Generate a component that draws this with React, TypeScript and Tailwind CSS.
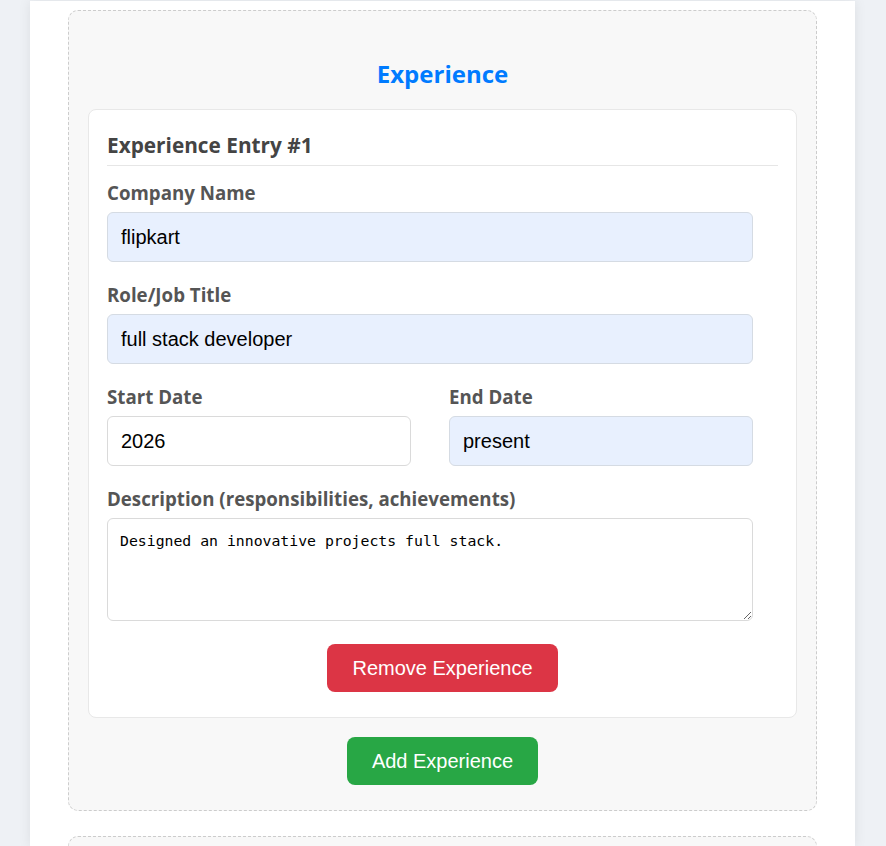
import React from "react";

const labelClass = "block h-[22px] leading-[22px] mb-[8px] text-[18.7px] font-bold text-[#555]";
const inputBase =
  "block h-[50px] rounded-[6px] border px-[13px] text-[20px] text-black outline-none";
const filled = "bg-[#e8f0fe] border-[#d5dbe3]";
const plain = "bg-white border-[#dadada]";

const Field: React.FC<{
  label: string;
  value: string;
  autofill?: boolean;
  className?: string;
  inputWidth: string;
}> = ({ label, value, autofill, className, inputWidth }) => (
  <div className={className}>
    <label className={labelClass}>{label}</label>
    <input
      readOnly
      value={value}
      className={`${inputBase} ${autofill ? filled : plain} ${inputWidth}`}
      style={{ fontFamily: '"Liberation Sans", Arial, sans-serif' }}
    />
  </div>
);

const App: React.FC = () => {
  return (
    <div className="h-screen overflow-hidden bg-[#eef1f5] font-['Open_Sans',sans-serif]">
      <div className="ml-[30px] mt-[1px] h-full w-[825px] bg-white px-[38px] pt-[9px] shadow-[0_0_12px_rgba(0,0,0,0.08)]">
        <section className="rounded-[10px] border border-dashed border-[#cccccc] bg-[#f8f8f8] px-[19px] pt-[20px] pb-[25px]">
          <h2 className="mt-[28px] mb-[21px] h-[29px] text-center text-[24px] leading-[29px] font-bold text-[#007bff]">
            Experience
          </h2>

          <div className="rounded-[8px] border border-[#e8e8e8] bg-white px-[18px] pt-[20px] pb-[25px]">
            <h3 className="mb-[16px] border-b border-[#e6e6e6] pt-[1px] pb-[6px] text-[20.8px] leading-[28px] font-bold text-[#444]">
              Experience Entry #1
            </h3>

            <Field label="Company Name" value="flipkart" autofill className="mb-[22px]" inputWidth="w-[646px]" />
            <Field
              label="Role/Job Title"
              value="full stack developer"
              autofill
              className="mb-[22px]"
              inputWidth="w-[646px]"
            />

            <div className="mb-[22px] flex gap-[15px]">
              <Field label="Start Date" value="2026" className="w-[327px]" inputWidth="w-[304px]" />
              <Field label="End Date" value="present" autofill className="w-[327px]" inputWidth="w-[304px]" />
            </div>

            <div>
              <label className={labelClass}>Description (responsibilities, achievements)</label>
              <textarea
                readOnly
                value="Designed an innovative projects full stack."
                className="block h-[103px] w-[646px] rounded-[6px] border border-[#dadada] bg-white px-[12px] py-[12px] text-[14.8px] leading-[20px] text-black outline-none"
                style={{ fontFamily: '"DejaVu Sans Mono", "Liberation Mono", monospace' }}
              />
            </div>

            <div className="mt-[23px] flex justify-center">
              <button
                type="button"
                className="h-[48px] w-[231px] rounded-[8px] bg-[#dc3545] text-[20px] text-white"
                style={{ fontFamily: '"Liberation Sans", Arial, sans-serif' }}
              >
                Remove Experience
              </button>
            </div>
          </div>

          <div className="mt-[19px] flex justify-center">
            <button
              type="button"
              className="h-[48px] w-[191px] rounded-[8px] bg-[#28a745] text-[20px] text-white"
              style={{ fontFamily: '"Liberation Sans", Arial, sans-serif' }}
            >
              Add Experience
            </button>
          </div>
        </section>

        <section className="mt-[25px] h-[200px] rounded-[10px] border border-dashed border-[#cccccc] bg-[#f8f8f8]" />
      </div>
    </div>
  );
};

export default App;
